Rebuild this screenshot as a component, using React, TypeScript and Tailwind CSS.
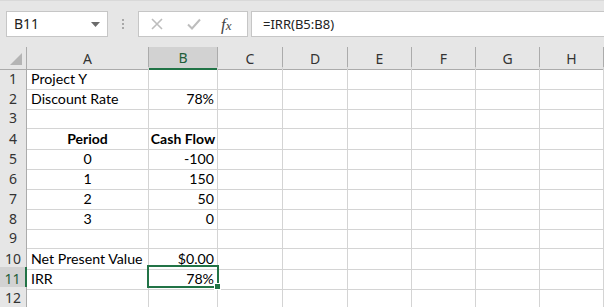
import React from "react";

const cols = ["A", "B", "C", "D", "E", "F", "G", "H"];

type Cell = { t?: string; align?: "l" | "c" | "r"; bold?: boolean };

const data: Record<number, Cell[]> = {
  1: [{ t: "Project Y" }],
  2: [{ t: "Discount Rate" }, { t: "78%", align: "r" }],
  3: [],
  4: [
    { t: "Period", align: "c", bold: true },
    { t: "Cash Flow", align: "c", bold: true },
  ],
  5: [{ t: "0", align: "c" }, { t: "-100", align: "r" }],
  6: [{ t: "1", align: "c" }, { t: "150", align: "r" }],
  7: [{ t: "2", align: "c" }, { t: "50", align: "r" }],
  8: [{ t: "3", align: "c" }, { t: "0", align: "r" }],
  9: [],
  10: [{ t: "Net Present Value" }, { t: "$0.00", align: "r" }],
  11: [{ t: "IRR" }, { t: "78%", align: "r" }],
  12: [],
};

const gridCols = "grid grid-cols-[27px_122px_69px_65px_65px_64px_64px_64px_64px]";
const uiFont = { fontFamily: "'Noto Sans', 'Open Sans', sans-serif" };

export default function App() {
  return (
    <div className="relative w-[604px] h-[307px] overflow-hidden bg-white" style={{ fontFamily: "Lato, 'Liberation Sans', sans-serif" }}>
      {/* Toolbar */}
      <div className="h-[47px] bg-[#e6e6e6] flex items-start pt-[11px] pl-[6px] border-t border-[#d9d9d9]">
        <div className="w-[102px] h-[26px] -mt-px border border-[#c6c6c6] bg-white flex items-center justify-between pl-[7px] pr-[7px]">
          <span className="text-[14px] text-[#222] leading-none" style={uiFont}>B11</span>
          <svg width="9" height="5" viewBox="0 0 9 5"><path d="M0 0 H9 L4.5 5 Z" fill="#6b6b6b" /></svg>
        </div>
        <div className="w-[30px] h-[26px] -mt-px flex flex-col items-center justify-center gap-[2px]">
          <div className="w-[2px] h-[2px] bg-[#a8a8a8]" />
          <div className="w-[2px] h-[2px] bg-[#a8a8a8]" />
          <div className="w-[2px] h-[2px] bg-[#a8a8a8]" />
        </div>
        <div className="w-[110px] h-[26px] -mt-px border border-[#c6c6c6] bg-white flex items-center">
          <svg className="ml-[12px]" width="12" height="12" viewBox="0 0 12 12">
            <path d="M1 1 L11 11 M11 1 L1 11" stroke="#bdbdbd" strokeWidth="1.6" />
          </svg>
          <svg className="ml-[24px]" width="14" height="12" viewBox="0 0 14 12">
            <path d="M1 6.5 L5 10.5 L13 1.5" stroke="#bdbdbd" strokeWidth="2" fill="none" />
          </svg>
          <span className="ml-[20px] text-[17px] italic text-[#444] leading-none" style={{ fontFamily: "'Liberation Serif', 'DejaVu Serif', serif" }}>
            f<span className="text-[13px]">x</span>
          </span>
        </div>
        <div className="ml-[3px] w-[353px] h-[26px] -mt-px border border-[#c6c6c6] border-r-0 bg-white flex items-center pl-[11px]">
          <span className="text-[13px] text-[#222] leading-none" style={uiFont}>=IRR(B5:B8)</span>
        </div>
      </div>

      {/* Column headers */}
      <div className={`${gridCols} h-[20px]`}>
        <div className="relative bg-[#e6e6e6] border-r border-b border-[#ababab]">
          <svg className="absolute right-[4px] bottom-[4px]" width="12" height="12" viewBox="0 0 12 12">
            <path d="M12 0 V12 H0 Z" fill="#b4b4b4" />
          </svg>
        </div>
        {cols.map((c) =>
          c === "B" ? (
            <div key={c} className="bg-[#d2d2d2] border-r border-[#ababab] border-b-2 border-b-[#217346] flex items-center justify-center text-[14px] text-[#1e5e3a]" style={uiFont}>
              {c}
            </div>
          ) : (
            <div key={c} className="bg-[#e6e6e6] border-r border-b border-[#ababab] flex items-center justify-center text-[14px] text-[#333]" style={uiFont}>
              {c}
            </div>
          )
        )}
      </div>

      {/* Rows */}
      {Array.from({ length: 12 }, (_, i) => i + 1).map((r) => {
        const row = data[r] || [];
        const sel = r === 11;
        return (
          <div key={r} className={`${gridCols} h-[20px]`}>
            <div
              className={
                sel
                  ? "bg-[#d2d2d2] border-b border-[#c8c8c8] border-r-2 border-r-[#217346] flex items-center justify-center text-[14px] text-[#1e5e3a]"
                  : "bg-[#e6e6e6] border-b border-[#d0d0d0] border-r border-r-[#ababab] flex items-center justify-center text-[14px] text-[#333]"
              }
              style={uiFont}
            >
              {r}
            </div>
            {cols.map((c, ci) => {
              const cell = row[ci];
              const align = cell?.align === "r" ? "justify-end pr-[3px]" : cell?.align === "c" ? "justify-center" : "justify-start pl-[4px]";
              return (
                <div
                  key={c}
                  className={`border-r border-b border-[#d4d4d4] flex items-center pt-px whitespace-nowrap text-black ${align} ${cell?.bold ? "font-bold text-[14px]" : "text-[14.2px]"}`}
                >
                  {cell?.t}
                </div>
              );
            })}
          </div>
        );
      })}

      {/* Selection */}
      <div className="absolute left-[147px] top-[265px] w-[72px] h-[23px] border-2 border-[#217346] pointer-events-none" />
      <div className="absolute left-[214px] top-[283px] w-[7px] h-[7px] bg-[#217346] border border-white" />
    </div>
  );
}
